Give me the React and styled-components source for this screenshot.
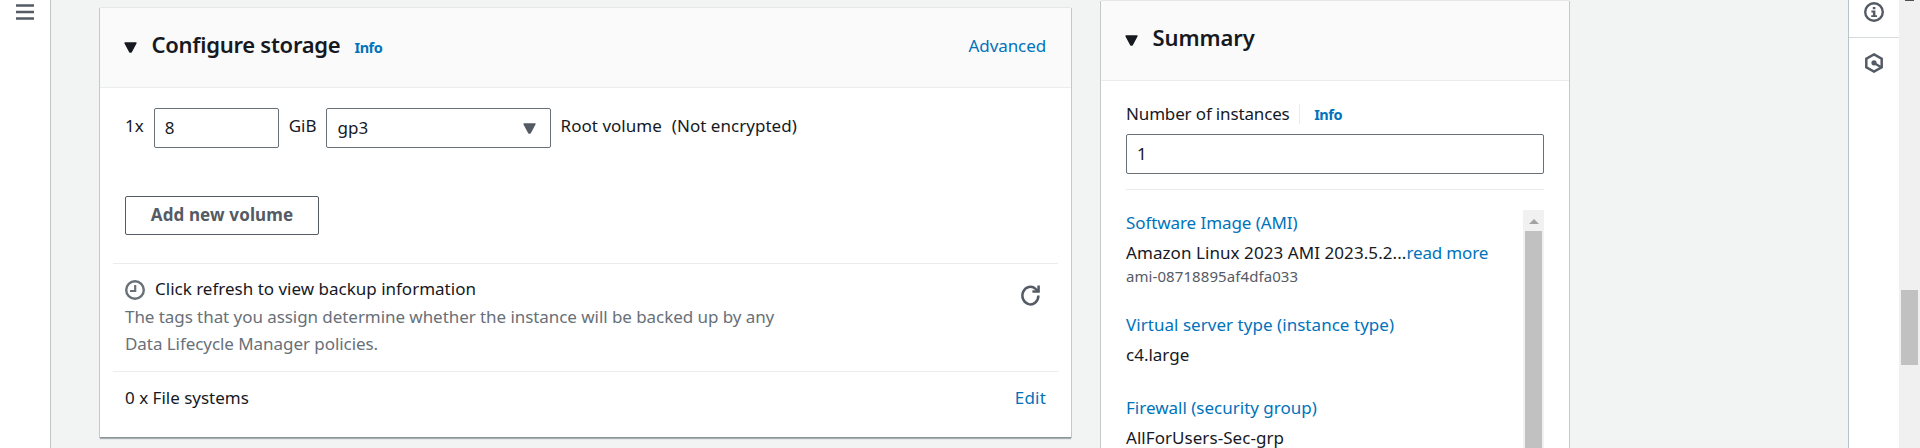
import React from "react";
import styled, { createGlobalStyle } from "styled-components";

const color = {
  text: "#16191f",
  secondary: "#687078",
  icon: "#545b64",
  link: "#0073bb",
  page: "#f2f3f3",
  line: "#eaeded",
};

const GlobalStyle = createGlobalStyle`
  *, *::before, *::after { box-sizing: border-box; }
  body { margin: 0; overflow: hidden; background: ${color.page}; }
`;

const Page = styled.div`
  display: flex;
  height: 448px;
  overflow: hidden;
  background: ${color.page};
  color: ${color.text};
  font: 400 17px/28px "Noto Sans", "Open Sans", sans-serif;
  svg { display: block; flex: none; }
`;

const NavRail = styled.nav`
  flex: none;
  width: 51px;
  padding: 4px 0 0 16px;
  background: #fff;
  border-right: 1px solid #c0c5c8;
`;

const Main = styled.main`
  flex: 1;
  display: flex;
  align-items: flex-start;
  gap: 30px;
  padding-left: 49px;
`;

const Panel = styled.section`
  flex: none;
  width: ${(p) => p.$width}px;
  height: ${(p) => p.$height}px;
  margin-top: ${(p) => p.$top}px;
  background: #fff;
  box-shadow: -1px 0 0 0 #c3c8ca, 1px 0 0 0 #c3c8ca, 0 -1px 0 0 #e5e8e9,
    0 1px 1px 0 rgba(0, 28, 36, 0.3);
  border-bottom: ${(p) => (p.$closed ? "1px solid #879596" : "0")};
`;

const PanelHeader = styled.header`
  display: flex;
  align-items: baseline;
  height: 80px;
  padding: 21px 25px 0 24px;
  background: #fafafa;
  border-bottom: 1px solid ${color.line};
  svg { margin-bottom: 2px; }
`;

const Title = styled.h2`
  margin: 0 14px 0 14.5px;
  font-size: 22px;
  line-height: 30px;
  font-weight: 600;
  letter-spacing: ${(p) => p.$track}px;
  white-space: nowrap;
`;

const Link = styled.a`
  color: ${color.link};
  letter-spacing: ${(p) => p.$track || 0}px;
  white-space: nowrap;
`;

const HeaderLink = styled(Link)`
  align-self: flex-start;
  margin: 3px 0 0 auto;
`;

const InfoLink = styled(Link)`
  font-size: 14.5px;
  font-weight: 700;
  letter-spacing: -0.45px;
`;

const StorageBody = styled.div`
  padding: 20px 13px 0;
`;

const VolumeRow = styled.div`
  display: flex;
  align-items: flex-start;
  padding-left: 12px;
`;

const Label = styled.span`
  margin: 4px ${(p) => p.$after || 0}px 0 ${(p) => p.$before || 0}px;
  letter-spacing: ${(p) => p.$track || 0}px;
  white-space: nowrap;
`;

const Field = styled.div`
  display: flex;
  align-items: center;
  justify-content: space-between;
  width: ${(p) => p.$width}px;
  height: 40px;
  padding: 0 14px 0 ${(p) => p.$inset || 10}px;
  background: #fff;
  border: 1px solid ${color.secondary};
  border-radius: 2px;
`;

const Button = styled.button`
  display: block;
  width: 194px;
  height: 39px;
  margin: 48px 0 28px 12px;
  padding: 0 0 1px;
  background: #fff;
  border: 1px solid ${color.icon};
  border-radius: 2px;
  color: ${color.icon};
  font: inherit;
  font-weight: 700;
  letter-spacing: 0.13px;
  white-space: nowrap;
`;

const Section = styled.div`
  display: flex;
  justify-content: space-between;
  padding: ${(p) => p.$padTop}px 12px 13px;
  border-top: 1px solid ${color.line};
`;

const BackupTitle = styled.div`
  display: flex;
  align-items: center;
  gap: 10px;
  svg { margin-top: 2px; }
`;

const Description = styled.p`
  width: 662px;
  margin: 0;
  color: ${color.secondary};
  line-height: 27.3px;
  letter-spacing: -0.06px;
`;

const RefreshButton = styled.div`
  padding: 10px 5.5px 0 0;
`;

const SummaryBody = styled.div`
  padding: 18.5px 25px 0;
`;

const FieldLabel = styled.div`
  display: flex;
  align-items: center;
  height: 28px;
  margin-bottom: 6.5px;
  letter-spacing: -0.15px;
`;

const Separator = styled.span`
  width: 1px;
  height: 20px;
  margin: 0 14.5px 0 9px;
  background: ${color.line};
`;

const Details = styled.div`
  display: flex;
  justify-content: space-between;
  margin-top: 15px;
  padding-top: 20px;
  border-top: 1px solid ${color.line};
`;

const DetailList = styled.div`
  display: flex;
  flex-direction: column;
  gap: 25px;
  margin-top: -1px;
`;

const Detail = styled.div`
  display: flex;
  flex-direction: column;
`;

const Value = styled.div`
  margin-top: 2px;
  letter-spacing: ${(p) => p.$track || 0}px;
  white-space: nowrap;
`;

const SubValue = styled.div`
  margin-top: -1px;
  color: ${color.icon};
  font-size: 15px;
  line-height: 20px;
  letter-spacing: 0.08px;
`;

const ListScroll = styled.div`
  display: flex;
  flex-direction: column;
  align-items: center;
  width: 21px;
  height: 260px;
  padding-top: 9px;
  background: #f1f1f1;
`;

const ListThumb = styled.div`
  flex: 1;
  width: 17px;
  margin-top: 7px;
  background: #c1c1c1;
`;

const ToolRail = styled.aside`
  flex: none;
  width: 51px;
  background: #fff;
  border-left: 1px solid #bcc3c6;
`;

const ToolCell = styled.div`
  display: flex;
  justify-content: center;
  height: ${(p) => p.$height}px;
  padding-top: ${(p) => p.$padTop}px;
  border-bottom: ${(p) => (p.$divided ? "1px solid #d5dbdb" : "0")};
`;

const PageScroll = styled.div`
  flex: none;
  display: flex;
  flex-direction: column;
  align-items: center;
  width: 21px;
  background: #f0f0f0;
`;

const ScrollArrowTip = styled.div`
  width: 9px;
  height: 1px;
  background: #505050;
`;

const PageThumb = styled.div`
  width: 17px;
  height: 75px;
  margin-top: 289px;
  background: #c1c1c1;
`;

const Caret = ({ fill = color.text }) => (
  <svg width="13" height="11" viewBox="0 0 13 11">
    <path d="M1 1h11L7.2 10H5.8z" fill={fill} stroke={fill} strokeWidth="1.4" strokeLinejoin="round" />
  </svg>
);

const MenuIcon = () => (
  <svg width="18" height="16" viewBox="0 0 18 16">
    <path d="M0 1.5h18M0 8h18M0 14.5h18" stroke={color.icon} strokeWidth="2.4" />
  </svg>
);

const ClockIcon = () => (
  <svg width="20" height="20" viewBox="0 0 20 20" fill="none" stroke={color.secondary}>
    <circle cx="10" cy="10" r="8.8" strokeWidth="2.4" />
    <path d="M10.2 5v6H5" strokeWidth="2.2" />
  </svg>
);

const RefreshIcon = () => (
  <svg width="20" height="21" viewBox="0 0 20 21" fill="none" stroke={color.icon} strokeWidth="2.5">
    <path d="M17.4 10.5A8 8.8 0 1 1 14.6 3.9L17 6" />
    <path d="M17.6 0.6V6.4H11.4" />
  </svg>
);

const InfoIcon = () => (
  <svg width="20" height="20" viewBox="0 0 20 20" fill="none">
    <circle cx="10" cy="10" r="8.8" stroke={color.icon} strokeWidth="2.4" />
    <path d="M8.8 5h2.6v2.3H8.8zM7.4 8.6h4v4.6H13v1.9H7.2v-1.9h1.7v-2.8H7.4z" fill={color.icon} />
  </svg>
);

const HexIcon = () => (
  <svg width="18" height="20" viewBox="0 0 18 20" fill="none" stroke={color.icon}>
    <path d="M9 1.4L16.7 5.7V14.3L9 18.6L1.3 14.3V5.7Z" strokeWidth="2.5" />
    <path d="M9 10l7.2 4.2" strokeWidth="2.3" />
    <circle cx="9" cy="9.8" r="2.6" fill={color.icon} stroke="none" />
  </svg>
);

const UpArrow = () => (
  <svg width="10" height="5" viewBox="0 0 10 5">
    <path d="M5 0l5 5H0z" fill="#a3a3a3" />
  </svg>
);

export default function App() {
  return (
    <Page>
      <GlobalStyle />
      <NavRail>
        <MenuIcon />
      </NavRail>
      <Main>
        <Panel $width={971} $height={430} $top={8} $closed>
          <PanelHeader>
            <Caret />
            <Title $track={-0.27}>Configure storage</Title>
            <InfoLink>Info</InfoLink>
            <HeaderLink $track={-0.1}>Advanced</HeaderLink>
          </PanelHeader>
          <StorageBody>
            <VolumeRow>
              <Label $after={10}>1x</Label>
              <Field $width={125}>8</Field>
              <Label $before={10} $after={9}>GiB</Label>
              <Field $width={225} $inset={11}>
                gp3
                <Caret fill={color.icon} />
              </Field>
              <Label $before={10} $track={0.03}>Root volume</Label>
              <Label $before={10} $track={0.03}>(Not encrypted)</Label>
            </VolumeRow>
            <Button>Add new volume</Button>
            <Section $padTop={11}>
              <div>
                <BackupTitle>
                  <ClockIcon />
                  Click refresh to view backup information
                </BackupTitle>
                <Description>
                  The tags that you assign determine whether the instance will be backed up by any
                  Data Lifecycle Manager policies.
                </Description>
              </div>
              <RefreshButton>
                <RefreshIcon />
              </RefreshButton>
            </Section>
            <Section $padTop={12}>
              <span>0 x File systems</span>
              <Link $track={0.2}>Edit</Link>
            </Section>
          </StorageBody>
        </Panel>
        <Panel $width={468} $height={460} $top={1}>
          <PanelHeader>
            <Caret />
            <Title $track={-0.1}>Summary</Title>
          </PanelHeader>
          <SummaryBody>
            <FieldLabel>
              Number of instances
              <Separator />
              <InfoLink>Info</InfoLink>
            </FieldLabel>
            <Field $width={418}>1</Field>
            <Details>
              <DetailList>
                <Detail>
                  <Link $track={-0.08}>Software Image (AMI)</Link>
                  <Value $track={0.07}>
                    Amazon Linux 2023 AMI 2023.5.2...<Link $track={-0.16}>read more</Link>
                  </Value>
                  <SubValue>ami-08718895af4dfa033</SubValue>
                </Detail>
                <Detail>
                  <Link $track={0.04}>Virtual server type (instance type)</Link>
                  <Value>c4.large</Value>
                </Detail>
                <Detail>
                  <Link>Firewall (security group)</Link>
                  <Value $track={0.05}>AllForUsers-Sec-grp</Value>
                </Detail>
              </DetailList>
              <ListScroll>
                <UpArrow />
                <ListThumb />
              </ListScroll>
            </Details>
          </SummaryBody>
        </Panel>
      </Main>
      <ToolRail>
        <ToolCell $height={38} $padTop={2} $divided>
          <InfoIcon />
        </ToolCell>
        <ToolCell $height={60} $padTop={15}>
          <HexIcon />
        </ToolCell>
      </ToolRail>
      <PageScroll>
        <ScrollArrowTip />
        <PageThumb />
      </PageScroll>
    </Page>
  );
}
